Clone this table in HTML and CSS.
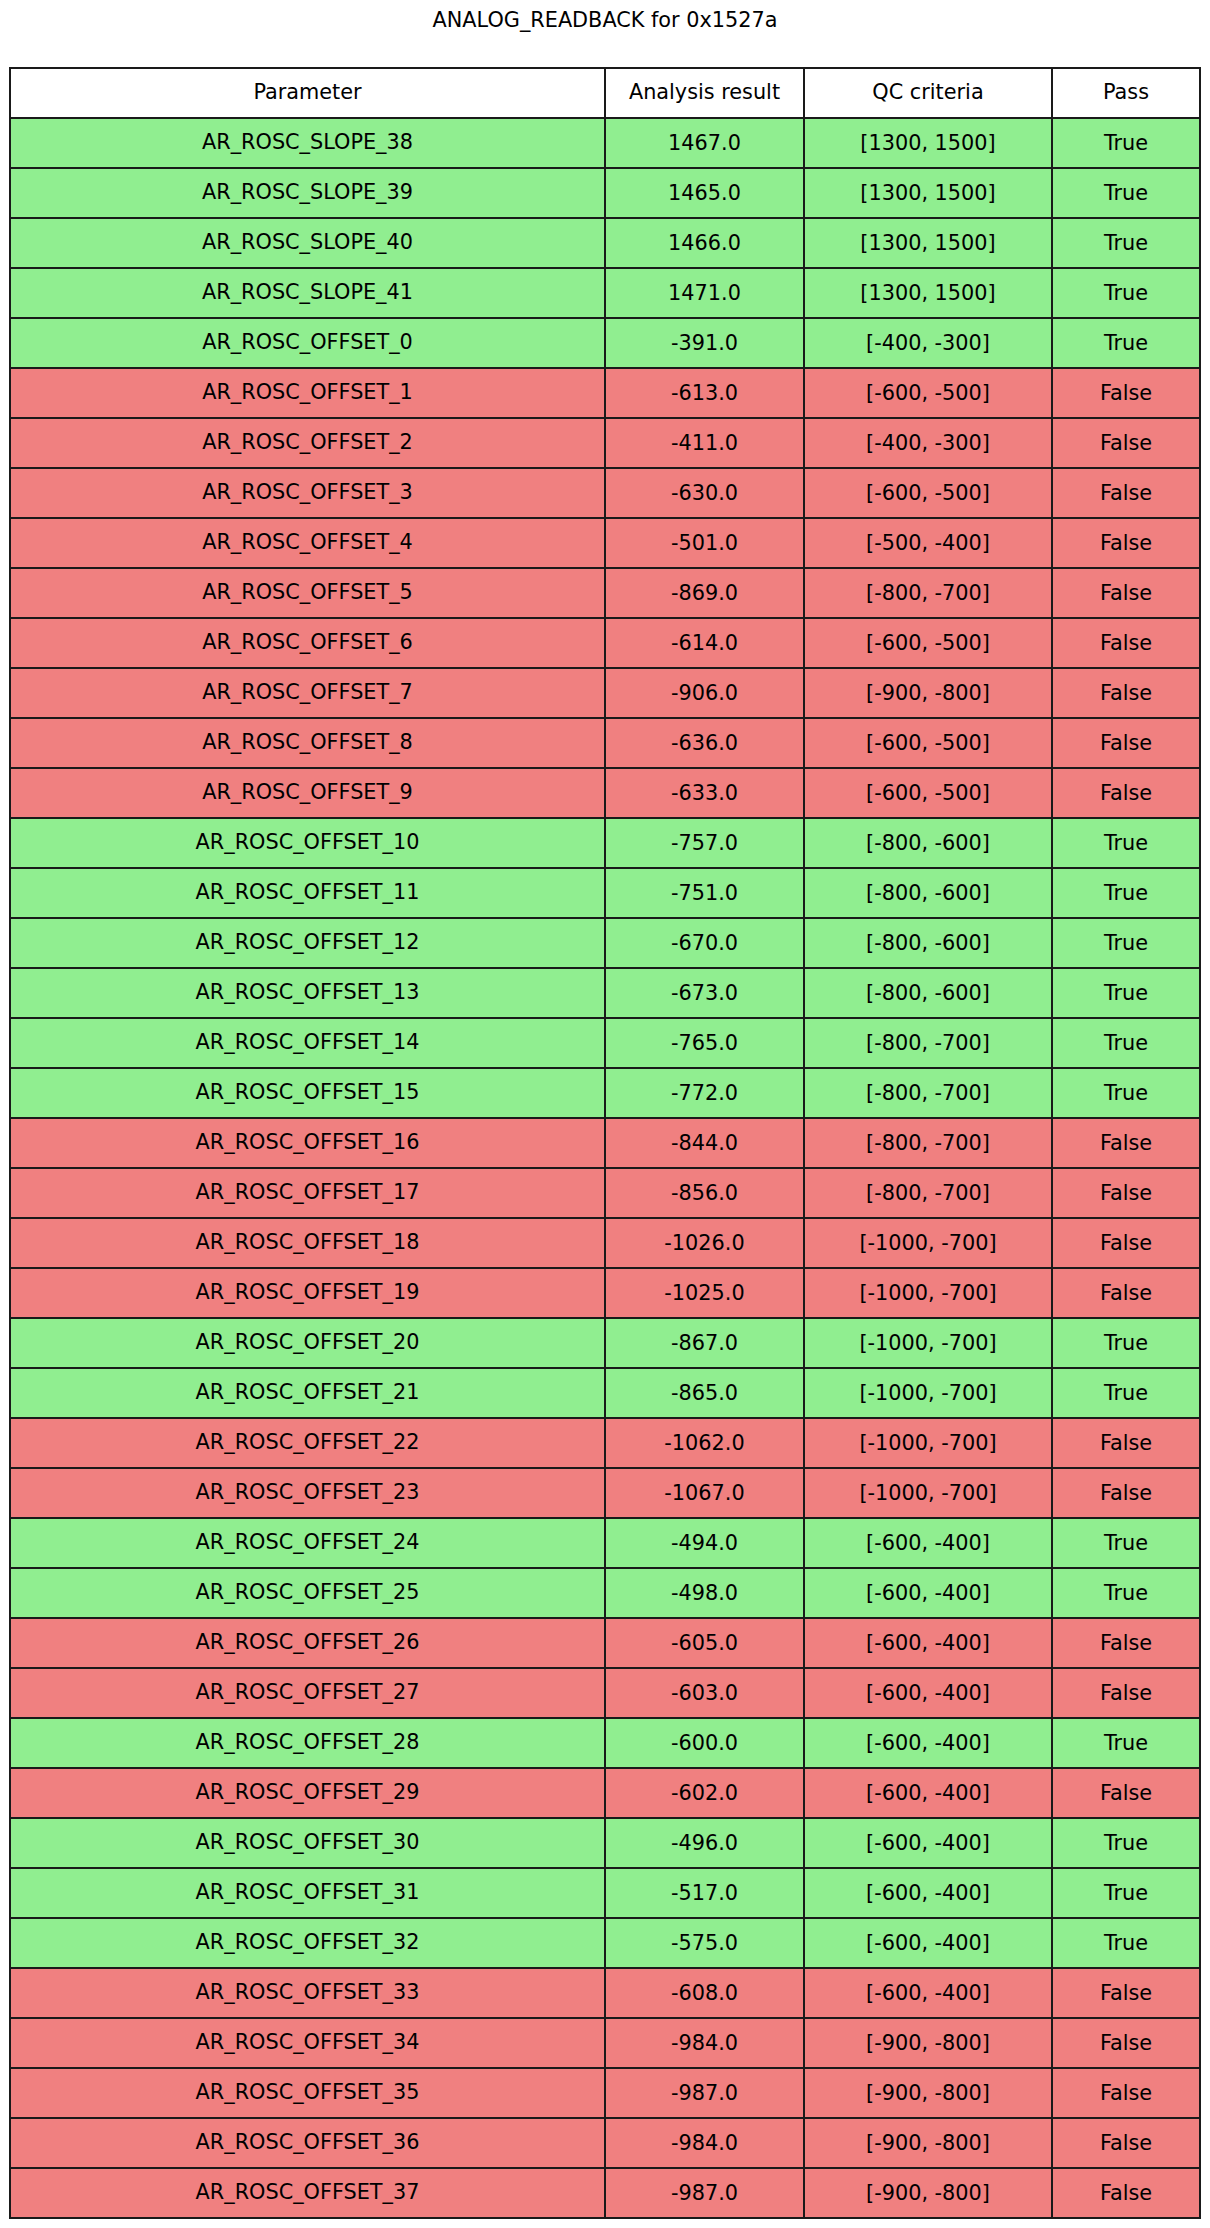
FILE: index.html
```html
<!DOCTYPE html>
<html>
<head>
<meta charset="utf-8">
<title>ANALOG_READBACK for 0x1527a</title>
<link rel="stylesheet" href="styles.css">
</head>
<body>
<div class="figure">
  <h1 class="title">ANALOG_READBACK for 0x1527a</h1>
  <div class="table">
    <div class="row head"><div class="cell param">Parameter</div><div class="cell">Analysis result</div><div class="cell">QC criteria</div><div class="cell">Pass</div></div>
    <div class="row pass"><div class="cell param">AR_ROSC_SLOPE_38</div><div class="cell">1467.0</div><div class="cell">[1300, 1500]</div><div class="cell">True</div></div>
    <div class="row pass"><div class="cell param">AR_ROSC_SLOPE_39</div><div class="cell">1465.0</div><div class="cell">[1300, 1500]</div><div class="cell">True</div></div>
    <div class="row pass"><div class="cell param">AR_ROSC_SLOPE_40</div><div class="cell">1466.0</div><div class="cell">[1300, 1500]</div><div class="cell">True</div></div>
    <div class="row pass"><div class="cell param">AR_ROSC_SLOPE_41</div><div class="cell">1471.0</div><div class="cell">[1300, 1500]</div><div class="cell">True</div></div>
    <div class="row pass"><div class="cell param">AR_ROSC_OFFSET_0</div><div class="cell">-391.0</div><div class="cell">[-400, -300]</div><div class="cell">True</div></div>
    <div class="row fail"><div class="cell param">AR_ROSC_OFFSET_1</div><div class="cell">-613.0</div><div class="cell">[-600, -500]</div><div class="cell">False</div></div>
    <div class="row fail"><div class="cell param">AR_ROSC_OFFSET_2</div><div class="cell">-411.0</div><div class="cell">[-400, -300]</div><div class="cell">False</div></div>
    <div class="row fail"><div class="cell param">AR_ROSC_OFFSET_3</div><div class="cell">-630.0</div><div class="cell">[-600, -500]</div><div class="cell">False</div></div>
    <div class="row fail"><div class="cell param">AR_ROSC_OFFSET_4</div><div class="cell">-501.0</div><div class="cell">[-500, -400]</div><div class="cell">False</div></div>
    <div class="row fail"><div class="cell param">AR_ROSC_OFFSET_5</div><div class="cell">-869.0</div><div class="cell">[-800, -700]</div><div class="cell">False</div></div>
    <div class="row fail"><div class="cell param">AR_ROSC_OFFSET_6</div><div class="cell">-614.0</div><div class="cell">[-600, -500]</div><div class="cell">False</div></div>
    <div class="row fail"><div class="cell param">AR_ROSC_OFFSET_7</div><div class="cell">-906.0</div><div class="cell">[-900, -800]</div><div class="cell">False</div></div>
    <div class="row fail"><div class="cell param">AR_ROSC_OFFSET_8</div><div class="cell">-636.0</div><div class="cell">[-600, -500]</div><div class="cell">False</div></div>
    <div class="row fail"><div class="cell param">AR_ROSC_OFFSET_9</div><div class="cell">-633.0</div><div class="cell">[-600, -500]</div><div class="cell">False</div></div>
    <div class="row pass"><div class="cell param">AR_ROSC_OFFSET_10</div><div class="cell">-757.0</div><div class="cell">[-800, -600]</div><div class="cell">True</div></div>
    <div class="row pass"><div class="cell param">AR_ROSC_OFFSET_11</div><div class="cell">-751.0</div><div class="cell">[-800, -600]</div><div class="cell">True</div></div>
    <div class="row pass"><div class="cell param">AR_ROSC_OFFSET_12</div><div class="cell">-670.0</div><div class="cell">[-800, -600]</div><div class="cell">True</div></div>
    <div class="row pass"><div class="cell param">AR_ROSC_OFFSET_13</div><div class="cell">-673.0</div><div class="cell">[-800, -600]</div><div class="cell">True</div></div>
    <div class="row pass"><div class="cell param">AR_ROSC_OFFSET_14</div><div class="cell">-765.0</div><div class="cell">[-800, -700]</div><div class="cell">True</div></div>
    <div class="row pass"><div class="cell param">AR_ROSC_OFFSET_15</div><div class="cell">-772.0</div><div class="cell">[-800, -700]</div><div class="cell">True</div></div>
    <div class="row fail"><div class="cell param">AR_ROSC_OFFSET_16</div><div class="cell">-844.0</div><div class="cell">[-800, -700]</div><div class="cell">False</div></div>
    <div class="row fail"><div class="cell param">AR_ROSC_OFFSET_17</div><div class="cell">-856.0</div><div class="cell">[-800, -700]</div><div class="cell">False</div></div>
    <div class="row fail"><div class="cell param">AR_ROSC_OFFSET_18</div><div class="cell">-1026.0</div><div class="cell">[-1000, -700]</div><div class="cell">False</div></div>
    <div class="row fail"><div class="cell param">AR_ROSC_OFFSET_19</div><div class="cell">-1025.0</div><div class="cell">[-1000, -700]</div><div class="cell">False</div></div>
    <div class="row pass"><div class="cell param">AR_ROSC_OFFSET_20</div><div class="cell">-867.0</div><div class="cell">[-1000, -700]</div><div class="cell">True</div></div>
    <div class="row pass"><div class="cell param">AR_ROSC_OFFSET_21</div><div class="cell">-865.0</div><div class="cell">[-1000, -700]</div><div class="cell">True</div></div>
    <div class="row fail"><div class="cell param">AR_ROSC_OFFSET_22</div><div class="cell">-1062.0</div><div class="cell">[-1000, -700]</div><div class="cell">False</div></div>
    <div class="row fail"><div class="cell param">AR_ROSC_OFFSET_23</div><div class="cell">-1067.0</div><div class="cell">[-1000, -700]</div><div class="cell">False</div></div>
    <div class="row pass"><div class="cell param">AR_ROSC_OFFSET_24</div><div class="cell">-494.0</div><div class="cell">[-600, -400]</div><div class="cell">True</div></div>
    <div class="row pass"><div class="cell param">AR_ROSC_OFFSET_25</div><div class="cell">-498.0</div><div class="cell">[-600, -400]</div><div class="cell">True</div></div>
    <div class="row fail"><div class="cell param">AR_ROSC_OFFSET_26</div><div class="cell">-605.0</div><div class="cell">[-600, -400]</div><div class="cell">False</div></div>
    <div class="row fail"><div class="cell param">AR_ROSC_OFFSET_27</div><div class="cell">-603.0</div><div class="cell">[-600, -400]</div><div class="cell">False</div></div>
    <div class="row pass"><div class="cell param">AR_ROSC_OFFSET_28</div><div class="cell">-600.0</div><div class="cell">[-600, -400]</div><div class="cell">True</div></div>
    <div class="row fail"><div class="cell param">AR_ROSC_OFFSET_29</div><div class="cell">-602.0</div><div class="cell">[-600, -400]</div><div class="cell">False</div></div>
    <div class="row pass"><div class="cell param">AR_ROSC_OFFSET_30</div><div class="cell">-496.0</div><div class="cell">[-600, -400]</div><div class="cell">True</div></div>
    <div class="row pass"><div class="cell param">AR_ROSC_OFFSET_31</div><div class="cell">-517.0</div><div class="cell">[-600, -400]</div><div class="cell">True</div></div>
    <div class="row pass"><div class="cell param">AR_ROSC_OFFSET_32</div><div class="cell">-575.0</div><div class="cell">[-600, -400]</div><div class="cell">True</div></div>
    <div class="row fail"><div class="cell param">AR_ROSC_OFFSET_33</div><div class="cell">-608.0</div><div class="cell">[-600, -400]</div><div class="cell">False</div></div>
    <div class="row fail"><div class="cell param">AR_ROSC_OFFSET_34</div><div class="cell">-984.0</div><div class="cell">[-900, -800]</div><div class="cell">False</div></div>
    <div class="row fail"><div class="cell param">AR_ROSC_OFFSET_35</div><div class="cell">-987.0</div><div class="cell">[-900, -800]</div><div class="cell">False</div></div>
    <div class="row fail"><div class="cell param">AR_ROSC_OFFSET_36</div><div class="cell">-984.0</div><div class="cell">[-900, -800]</div><div class="cell">False</div></div>
    <div class="row fail"><div class="cell param">AR_ROSC_OFFSET_37</div><div class="cell">-987.0</div><div class="cell">[-900, -800]</div><div class="cell">False</div></div>
  </div>
</div>
</body>
</html>
```
FILE: styles.css
```css
html, body {
  margin: 0;
  padding: 0;
  background: #ffffff;
}

.figure {
  width: 1210px;
  font-family: "DejaVu Sans", "Liberation Sans", sans-serif;
  color: #000000;
}

.title {
  margin: 0;
  height: 67px;
  box-sizing: border-box;
  padding-top: 7.5px;
  font-size: 20.8px;
  font-weight: normal;
  line-height: 24px;
  text-align: center;
}

.table {
  margin-left: 9px;
  width: 1192px;
  box-sizing: border-box;
  border-top: 2px solid #1a1a1a;
  border-left: 2px solid #1a1a1a;
}

.row {
  display: grid;
  grid-template-columns: 595px 199px 248px 148px;
  height: 50px;
}

.row.head { background: #ffffff; }
.row.pass { background: #90ee90; }
.row.fail { background: #f08080; }

.cell {
  box-sizing: border-box;
  border-right: 2px solid #1a1a1a;
  border-bottom: 2px solid #1a1a1a;
  display: flex;
  align-items: center;
  justify-content: center;
  font-size: 20.8px;
  line-height: 24px;
  white-space: nowrap;
}

.cell.param {
  padding-bottom: 3px;
}

.row.head .cell {
  padding-bottom: 2px;
}
```
